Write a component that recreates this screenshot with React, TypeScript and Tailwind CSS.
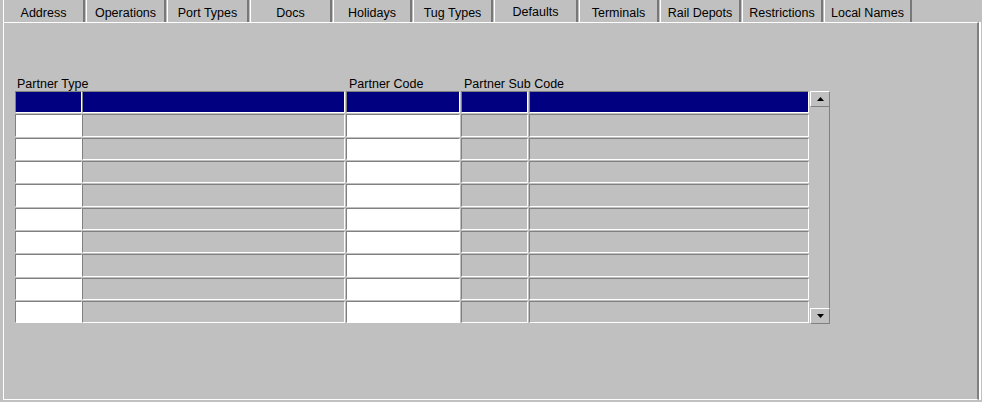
import React from "react";

const tabs: { label: string; cls: string; active?: boolean }[] = [
  { label: "Address", cls: "w-[82px] mr-px" },
  { label: "Operations", cls: "w-[80px] mr-px" },
  { label: "Port Types", cls: "w-[82px] mr-px" },
  { label: "Docs", cls: "w-[82px] mr-px" },
  { label: "Holidays", cls: "w-[79px] mr-px" },
  { label: "Tug Types", cls: "w-[80px] mr-px" },
  { label: "Defaults", cls: "w-[84px] mr-px", active: true },
  { label: "Terminals", cls: "w-[80px] mr-px" },
  { label: "Rail Depots", cls: "w-[81px] mr-px" },
  { label: "Restrictions", cls: "w-[81px] mr-px" },
  { label: "Local Names", cls: "w-[88px]" },
];

const rowCls = [
  "h-[22px] mb-px",
  "h-[23px] mb-px",
  "h-[22px] mb-px",
  "h-[22px] mb-px",
  "h-[23px] mb-px",
  "h-[22px] mb-px",
  "h-[22px] mb-px",
  "h-[23px] mb-px",
  "h-[22px] mb-px",
  "h-[22px]",
];

const cellBase =
  "h-full border border-t-[#808080] border-l-[#808080] border-b-white border-r-white";

function Row({ hcls, selected }: { hcls: string; selected: boolean }) {
  const white = selected ? "bg-[#000080]" : "bg-white";
  const gray = selected ? "bg-[#000080]" : "bg-[#c0c0c0]";
  return (
    <div className={`flex ${hcls}`}>
      <div className={`${cellBase} ${white} w-[67px]`} />
      <div className={`${cellBase} ${gray} w-[263px] mr-px`} />
      <div className={`${cellBase} ${white} w-[114px] mr-px`} />
      <div className={`${cellBase} ${gray} w-[67px] mr-px`} />
      <div className={`${cellBase} ${gray} w-[280px] mr-px`} />
    </div>
  );
}

function ScrollButton({ up }: { up: boolean }) {
  return (
    <div className="h-[16px] w-[20px] flex items-center justify-center bg-[#c0c0c0] border border-t-white border-l-white border-r-[#808080] border-b-[#808080]">
      <svg width="7" height="4" viewBox="0 0 7 4">
        {up ? (
          <polygon points="3.5,0 7,4 0,4" fill="#000" />
        ) : (
          <polygon points="0,0 7,0 3.5,4" fill="#000" />
        )}
      </svg>
    </div>
  );
}

export default function App() {
  return (
    <div
      className="w-[982px] h-[402px] bg-[#c0c0c0] overflow-hidden text-black"
      style={{ fontFamily: '"Liberation Sans", Arial, sans-serif' }}
    >
      <div className="flex h-[22px] pl-[3px]">
        {tabs.map((t) => (
          <div
            key={t.label}
            className={`${t.cls} h-full border-l border-l-white border-r-2 border-r-[#787878] flex justify-center ${
              t.active ? "pt-[5px]" : "pt-[6px]"
            }`}
          >
            <span className="text-[12.5px] leading-[14px] whitespace-nowrap">{t.label}</span>
          </div>
        ))}
      </div>
      <div className="ml-[3px] w-[976px] h-[378px] border-t border-l border-b border-t-white border-l-white border-b-white border-r-2 border-r-[#808080] shadow-[2px_0_0_#ffffff] pl-[11px] pt-[53px]">
        <div className="flex text-[12.5px] leading-[14px] h-[15px] pt-px">
          <div className="w-[331px] pl-[2px]">Partner Type</div>
          <div className="w-[115px] pl-[3px]">Partner Code</div>
          <div className="pl-[3px] whitespace-nowrap">Partner Sub Code</div>
        </div>
        <div className="flex">
          <div className="flex flex-col">
            {rowCls.map((h, i) => (
              <Row key={i} hcls={h} selected={i === 0} />
            ))}
          </div>
          <div className="flex flex-col w-[20px] h-[233px]">
            <ScrollButton up />
            <div className="flex-1 bg-[#c0c0c0] border-r border-r-[#808080]" />
            <ScrollButton up={false} />
          </div>
        </div>
      </div>
    </div>
  );
}
